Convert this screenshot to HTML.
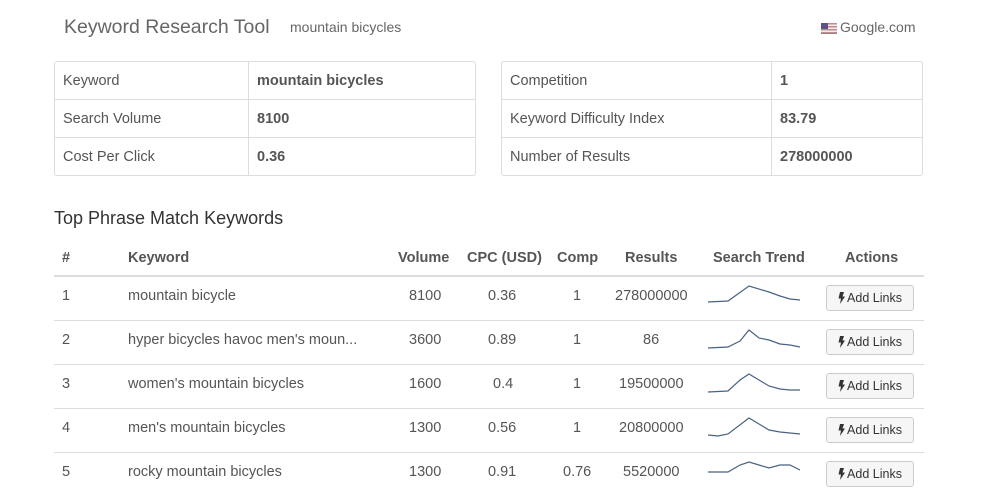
<!DOCTYPE html><html><head><style>
body{margin:0;width:989px;height:496px;overflow:hidden;background:#fff;font-family:"Liberation Sans",sans-serif;color:#555;position:relative}
.a{position:absolute;white-space:nowrap}
.box{position:absolute;border:1px solid #ddd;border-radius:3px;box-sizing:border-box}
.r{position:absolute;left:0;right:0;height:38px;border-top:1px solid #ddd;box-sizing:border-box}
.v{position:absolute;top:0;bottom:0;border-left:1px solid #ddd}
.hl{position:absolute;left:54px;width:870px;height:0;border-top:1px solid #ddd}
.btn{position:absolute;left:826px;width:88px;height:26px;border:1px solid #ccc;border-radius:3px;background:#f6f6f6;box-sizing:border-box;font-size:12.5px;color:#333;line-height:24px;text-align:center}
.btn svg{vertical-align:-2px;margin-right:2px}
.t{font-size:14.5px;margin-top:2px}
</style></head><body>
<div class="a" style="left:64px;top:16px;font-size:19.5px;color:#666">Keyword Research Tool</div>
<div class="a" style="left:290px;top:19px;font-size:14px;color:#666">mountain bicycles</div>
<svg class="a" style="left:821px;top:23px" width="16" height="11" viewBox="0 0 16 11"><rect width="16" height="11" fill="#c88"/><rect y="1.5" width="16" height="1.5" fill="#eee"/><rect y="4.5" width="16" height="1.5" fill="#eee"/><rect y="7.5" width="16" height="1.5" fill="#eee"/><rect width="7" height="6" fill="#558"/><rect x="0" y="10" width="16" height="1" fill="#888"/></svg>
<div class="a" style="left:840px;top:19px;font-size:14px;color:#666">Google.com</div>

<div class="box" style="left:54px;top:61px;width:422px;height:115px">
<div class="v" style="left:193px"></div>
<div class="r" style="top:37px"></div><div class="r" style="top:75px;border-bottom:0"></div>
</div>
<div class="a t" style="left:63px;top:71px">Keyword</div><div class="a t" style="left:257px;top:71px;font-weight:bold">mountain bicycles</div>
<div class="a t" style="left:63px;top:109px">Search Volume</div><div class="a t" style="left:257px;top:109px;font-weight:bold">8100</div>
<div class="a t" style="left:63px;top:147px">Cost Per Click</div><div class="a t" style="left:257px;top:147px;font-weight:bold">0.36</div>

<div class="box" style="left:501px;top:61px;width:422px;height:115px">
<div class="v" style="left:269px"></div>
<div class="r" style="top:37px"></div><div class="r" style="top:75px;border-bottom:0"></div>
</div>
<div class="a t" style="left:510px;top:71px">Competition</div><div class="a t" style="left:780px;top:71px;font-weight:bold">1</div>
<div class="a t" style="left:510px;top:109px">Keyword Difficulty Index</div><div class="a t" style="left:780px;top:109px;font-weight:bold">83.79</div>
<div class="a t" style="left:510px;top:147px">Number of Results</div><div class="a t" style="left:780px;top:147px;font-weight:bold">278000000</div>

<div class="a" style="left:54px;top:208px;font-size:18px;color:#333">Top Phrase Match Keywords</div>

<div class="a t" style="left:62px;top:248px;font-weight:bold">#</div>
<div class="a t" style="left:128px;top:248px;font-weight:bold">Keyword</div>
<div class="a t" style="left:398px;top:248px;font-weight:bold">Volume</div>
<div class="a t" style="left:467px;top:248px;font-weight:bold">CPC (USD)</div>
<div class="a t" style="left:557px;top:248px;font-weight:bold">Comp</div>
<div class="a t" style="left:625px;top:248px;font-weight:bold">Results</div>
<div class="a t" style="left:713px;top:248px;font-weight:bold">Search Trend</div>
<div class="a t" style="left:845px;top:248px;font-weight:bold">Actions</div>
<div class="hl" style="top:275px;border-top-width:2px"></div>
<div class="hl" style="top:320px"></div><div class="hl" style="top:364px"></div><div class="hl" style="top:408px"></div><div class="hl" style="top:452px"></div>

<div class="a t" style="left:62px;top:286px">1</div><div class="a t" style="left:128px;top:286px">mountain bicycle</div><div class="a t" style="left:409px;top:286px">8100</div><div class="a t" style="left:488px;top:286px">0.36</div><div class="a t" style="left:573px;top:286px">1</div><div class="a t" style="left:615px;top:286px">278000000</div>
<div class="a t" style="left:62px;top:330px">2</div><div class="a t" style="left:128px;top:330px">hyper bicycles havoc men's moun...</div><div class="a t" style="left:409px;top:330px">3600</div><div class="a t" style="left:488px;top:330px">0.89</div><div class="a t" style="left:573px;top:330px">1</div><div class="a t" style="left:643px;top:330px">86</div>
<div class="a t" style="left:62px;top:374px">3</div><div class="a t" style="left:128px;top:374px">women's mountain bicycles</div><div class="a t" style="left:409px;top:374px">1600</div><div class="a t" style="left:493px;top:374px">0.4</div><div class="a t" style="left:573px;top:374px">1</div><div class="a t" style="left:619px;top:374px">19500000</div>
<div class="a t" style="left:62px;top:418px">4</div><div class="a t" style="left:128px;top:418px">men's mountain bicycles</div><div class="a t" style="left:409px;top:418px">1300</div><div class="a t" style="left:488px;top:418px">0.56</div><div class="a t" style="left:573px;top:418px">1</div><div class="a t" style="left:619px;top:418px">20800000</div>
<div class="a t" style="left:62px;top:462px">5</div><div class="a t" style="left:128px;top:462px">rocky mountain bicycles</div><div class="a t" style="left:409px;top:462px">1300</div><div class="a t" style="left:488px;top:462px">0.91</div><div class="a t" style="left:563px;top:462px">0.76</div><div class="a t" style="left:623px;top:462px">5520000</div>

<svg class="a" style="left:0;top:0" width="989" height="496" fill="none" stroke="#4a6282" stroke-width="1.2">
<polyline points="708,302 728,301 749,286 769,292 780,296 790,299 800,300"/>
<polyline points="708,348 728,347 740,341 749,330 759,338 769,340 780,344 790,345 800,347"/>
<polyline points="708,392 728,391 740,380 749,374 759,380 769,386 780,389 790,390 800,390"/>
<polyline points="708,435 718,436 728,434 749,418 759,424 769,430 780,432 790,433 800,434"/>
<polyline points="708,472 728,472 740,465 749,462 759,465 769,468 780,465 790,465 800,470"/>
</svg>

<div class="btn" style="top:285px"><svg width="7" height="12" viewBox="0 0 7 12"><path d="M2 0H6L4.5 4.5H7L2 12L3 6.5H0.5Z" fill="#333"/></svg>Add Links</div>
<div class="btn" style="top:329px"><svg width="7" height="12" viewBox="0 0 7 12"><path d="M2 0H6L4.5 4.5H7L2 12L3 6.5H0.5Z" fill="#333"/></svg>Add Links</div>
<div class="btn" style="top:373px"><svg width="7" height="12" viewBox="0 0 7 12"><path d="M2 0H6L4.5 4.5H7L2 12L3 6.5H0.5Z" fill="#333"/></svg>Add Links</div>
<div class="btn" style="top:417px"><svg width="7" height="12" viewBox="0 0 7 12"><path d="M2 0H6L4.5 4.5H7L2 12L3 6.5H0.5Z" fill="#333"/></svg>Add Links</div>
<div class="btn" style="top:461px"><svg width="7" height="12" viewBox="0 0 7 12"><path d="M2 0H6L4.5 4.5H7L2 12L3 6.5H0.5Z" fill="#333"/></svg>Add Links</div>
</body></html>
